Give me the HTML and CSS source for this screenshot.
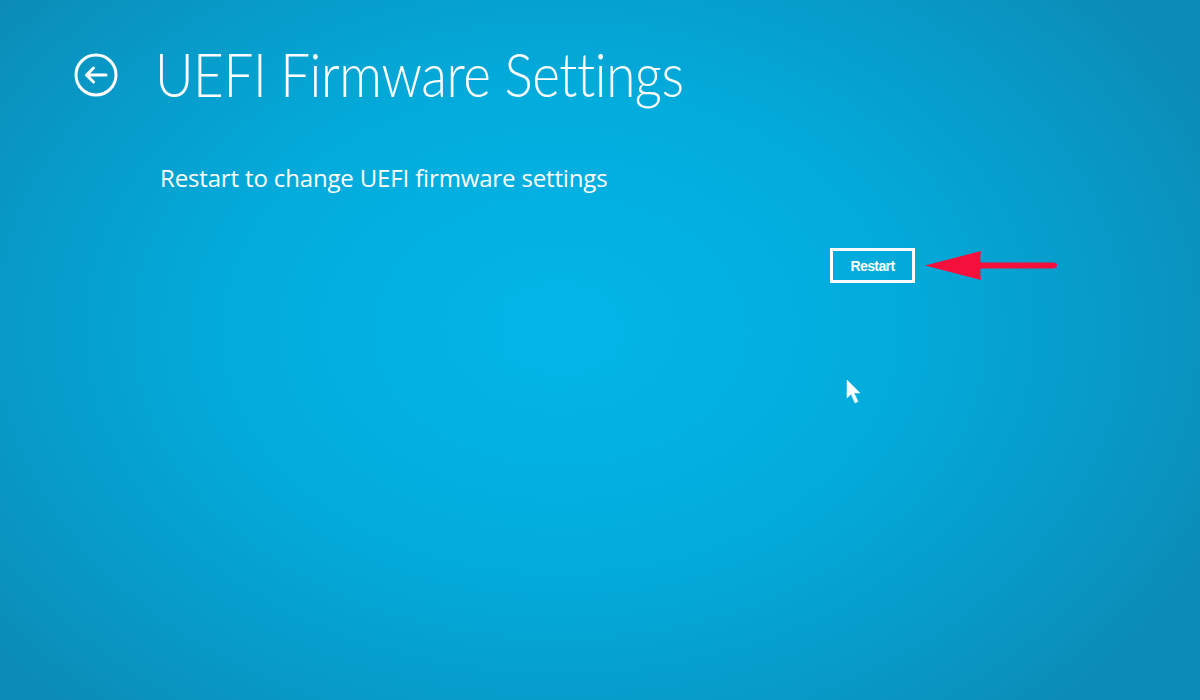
FILE: index.html
```html
<!DOCTYPE html>
<html lang="en">
<head>
    <meta charset="UTF-8">
    <meta name="viewport" content="width=device-width, initial-scale=1.0">
    <title>UEFI Firmware Settings</title>
    <link rel="stylesheet" href="styles.css">
</head>

<body>
    <div class="screen">
        <header class="title_bar">
            <button class="back_btn" aria-label="Back">
                <svg width="44" height="44" viewBox="0 0 44 44">
                    <circle cx="22" cy="22" r="20" fill="none" stroke="#fff" stroke-width="3"/>
                    <path d="M32 22 H12.5 M19.5 15 L12.5 22 L19.5 29" fill="none" stroke="#fff" stroke-width="3" stroke-linecap="round" stroke-linejoin="round"/>
                </svg>
            </button>
            <h1 class="title">UEFI Firmware Settings</h1>
        </header>

        <div class="content">
            <p class="desc">Restart to change UEFI firmware settings</p>
            <div class="actions">
                <button class="restart_btn">Restart</button>
                <!-- red annotation arrow -->
                <svg class="red_arrow" width="140" height="34" viewBox="0 0 140 34">
                    <path d="M2 16.5 L58 2 Q57 9 57.5 13.5 L130 13.5 Q134 13.5 134 16.5 Q134 19.5 130 19.5 L57.5 19.5 Q57 25 58 31 Z" fill="#f5103c"/>
                </svg>
            </div>
        </div>

        <svg class="cursor" width="16" height="26" viewBox="0 0 16 26">
            <path d="M1 1 L1 19 L5 15 L9 24 L12 22.5 L8 14 L14 14 Z" fill="#fff" stroke="#dff4fb" stroke-width="0.6"/>
        </svg>
    </div>
</body>
</html>
```

FILE: styles.css
```css
html, body {
    height: 100%;
    margin: 0;
    padding: 0;
    overflow: hidden;
}

body {
    font-family: "Open Sans", "Noto Sans", sans-serif;
    color: #fff;
}

.screen {
    position: relative;
    width: 1200px;
    height: 700px;
    background: radial-gradient(ellipse 720px 520px at 560px 330px, #03b6e8 0%, #02acdc 45%, #0898c6 80%, #0b8cb6 100%);
    box-sizing: border-box;
    padding-top: 31px;
}

.title_bar {
    display: flex;
    align-items: center;
    padding-left: 74px;
}

.back_btn {
    width: 44px;
    height: 44px;
    padding: 0;
    border: none;
    background: none;
    display: flex;
    margin-right: 37px;
    margin-top: 4px;
}

.title {
    margin: 0;
    font-family: Lato, "Open Sans", sans-serif;
    font-size: 62px;
    font-weight: 300;
    line-height: 84px;
    letter-spacing: -0.5px;
    white-space: nowrap;
    /* Segoe-style narrow letters */
    transform: scaleX(0.855);
    transform-origin: left center;
}

.content {
    padding-left: 160px;
}

.desc {
    margin: 47px 0 0;
    font-size: 24px;
    font-weight: 400;
    line-height: 32px;
    letter-spacing: -0.15px;
}

.actions {
    display: flex;
    align-items: center;
    margin-top: 54px;
    padding-left: 670px;
}

.restart_btn {
    width: 85px;
    height: 35px;
    padding: 0;
    border: 3px solid #fff;
    background: transparent;
    color: #fff;
    font-family: "Liberation Sans", Arial, sans-serif;
    font-size: 14px;
    font-weight: 700;
    letter-spacing: -0.6px;
}

.red_arrow {
    margin-left: 8px;
}

.cursor {
    position: absolute;
    left: 846px;
    top: 379px;
}
```
